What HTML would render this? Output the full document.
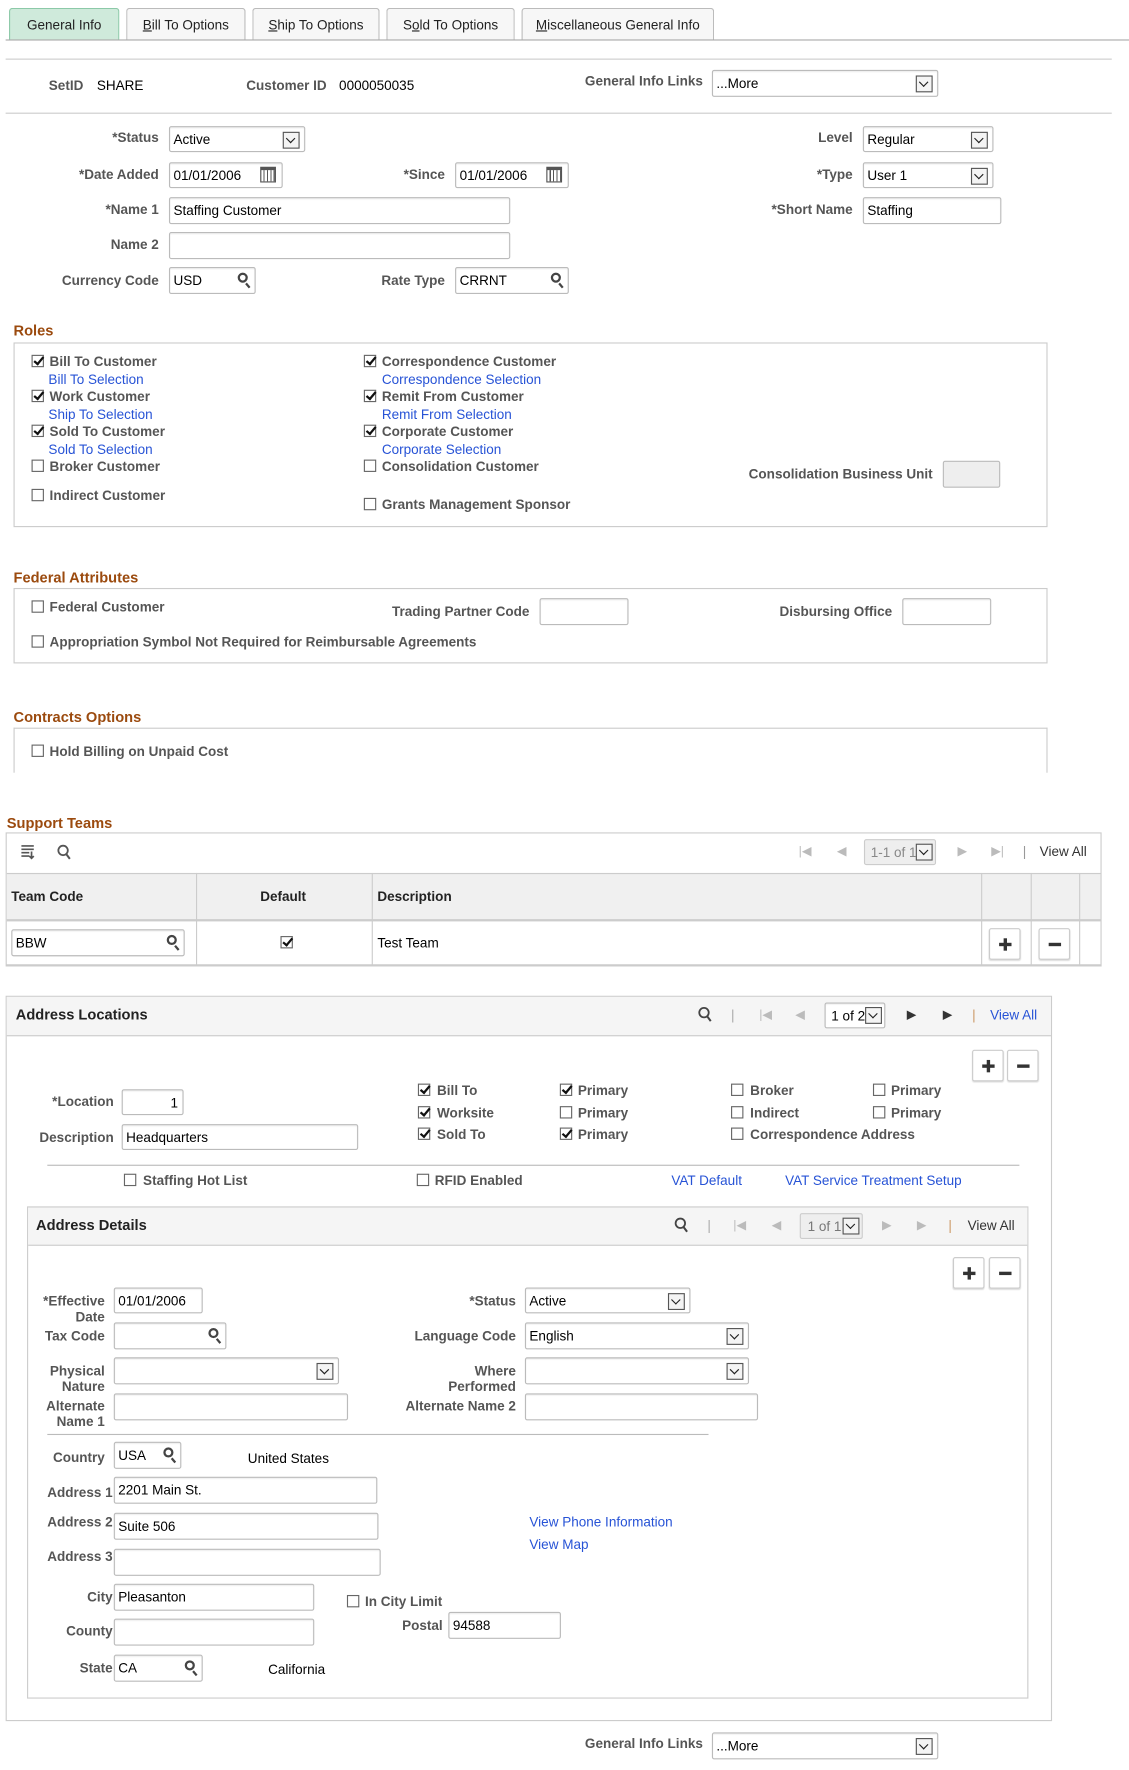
<!DOCTYPE html>
<html><head><meta charset="utf-8"><style>
*{margin:0;padding:0;box-sizing:border-box}
body{width:1129px;height:1764px;overflow:hidden;background:#fff;font-family:"Liberation Sans",Arial,sans-serif;font-size:12px;color:#000}
#w{position:absolute;left:0;top:0;width:1005px;height:1571px;transform:scale(1.1264);transform-origin:0 0}
.a{position:absolute;white-space:nowrap;line-height:14px}
.l{position:absolute;white-space:nowrap;font-weight:bold;color:#555;text-align:right;line-height:14px}
.v{position:absolute;white-space:nowrap;line-height:14px;color:#000}
.i{position:absolute;border:1px solid #bbb;border-radius:2px;background:#fff;padding-left:3px;line-height:22px;white-space:nowrap;box-shadow:inset 0 1px 1px #eee}
.dd{position:absolute;right:4px;top:4px;width:15px;height:15px;border:1px solid #555;background:#f4f4f4}
.dd:after{content:"";position:absolute;left:3px;top:2px;width:5px;height:5px;border-right:1.5px solid #222;border-bottom:1.5px solid #222;transform:rotate(45deg)}
.mg{position:absolute;right:6px;top:4px;width:9px;height:9px;border:2px solid #444;border-radius:50%}
.mg:after{content:"";position:absolute;left:6px;top:7px;width:2px;height:5px;background:#444;transform:rotate(-40deg)}
.cal{position:absolute;right:5px;top:3px;width:14px;height:14px;border:1px solid #555;border-top:3px solid #555;background:repeating-linear-gradient(90deg,#fff 0 2px,#555 2px 3px);}
.cb{position:absolute;width:11px;height:11px;border:1px solid #666;background:#fff}
.cb.c:after{content:"";position:absolute;left:3px;top:-1px;width:3px;height:7px;border-right:2px solid #111;border-bottom:2px solid #111;transform:rotate(40deg)}
.lk{position:absolute;white-space:nowrap;color:#2753d6;line-height:14px}
.h{position:absolute;font-weight:bold;color:#9b4a0e;font-size:13px;line-height:14px}
.bx{position:absolute;border:1px solid #ccc}
.hl{position:absolute;height:1px;background:#ccc}
.tab{position:absolute;top:7px;height:29px;border:1px solid #bbb;border-bottom:none;border-radius:3px 3px 0 0;background:#f7f7f7;text-align:center;line-height:28px;color:#222}
.btn{position:absolute;width:28px;height:28px;border:1px solid #ccc;border-radius:2px;background:#fff;box-shadow:0 1px 1px #ddd}
.btn.p:before{content:"";position:absolute;left:8px;top:12px;width:11px;height:3px;background:#333}
.btn.p:after{content:"";position:absolute;left:12px;top:8px;width:3px;height:11px;background:#333}
.btn.m:before{content:"";position:absolute;left:8px;top:12px;width:11px;height:3px;background:#333}
.nv{position:absolute;color:#bbb;font-size:11px;line-height:14px}
.u{text-decoration:underline}
</style></head><body><div id="w">

<div class="tab" style="left:8px;width:98px;background:#cfeadb;border-color:#8cc9a8;font-weight:normal">General Info</div>
<div class="tab" style="left:112px;width:106px"><span class="u">B</span>ill To Options</div>
<div class="tab" style="left:224px;width:113px"><span class="u">S</span>hip To Options</div>
<div class="tab" style="left:343px;width:114px">S<span class="u">o</span>ld To Options</div>
<div class="tab" style="left:463px;width:171px"><span class="u">M</span>iscellaneous General Info</div>
<div class="hl" style="left:5px;top:35px;width:998px;background:#aaa"></div>
<div class="hl" style="left:5px;top:52px;width:982px"></div>

<div class="l" style="right:931px;top:69px">SetID</div>
<div class="v" style="left:86px;top:69px">SHARE</div>
<div class="l" style="right:715px;top:69px">Customer ID</div>
<div class="v" style="left:301px;top:69px">0000050035</div>
<div class="l" style="right:381px;top:65px">General Info Links</div>
<div class="i" style="left:632px;top:62px;width:201px;height:24px">...More<div class="dd"></div></div>
<div class="hl" style="left:5px;top:100px;width:982px"></div>

<div class="l" style="right:864px;top:115px">*Status</div>
<div class="i" style="left:150px;top:112px;width:121px;height:23px">Active<div class="dd"></div></div>
<div class="l" style="right:248px;top:115px">Level</div>
<div class="i" style="left:766px;top:112px;width:116px;height:23px">Regular<div class="dd"></div></div>

<div class="l" style="right:864px;top:148px">*Date Added</div>
<div class="i" style="left:150px;top:144px;width:101px;height:23px">01/01/2006<div class="cal"></div></div>
<div class="l" style="right:610px;top:148px">*Since</div>
<div class="i" style="left:404px;top:144px;width:101px;height:23px">01/01/2006<div class="cal"></div></div>
<div class="l" style="right:248px;top:148px">*Type</div>
<div class="i" style="left:766px;top:144px;width:116px;height:23px">User 1<div class="dd"></div></div>

<div class="l" style="right:864px;top:179px">*Name 1</div>
<div class="i" style="left:150px;top:175px;width:303px;height:24px">Staffing Customer</div>
<div class="l" style="right:248px;top:179px">*Short Name</div>
<div class="i" style="left:766px;top:175px;width:123px;height:24px">Staffing</div>
<div class="l" style="right:864px;top:210px">Name 2</div>
<div class="i" style="left:150px;top:206px;width:303px;height:24px"></div>

<div class="l" style="right:864px;top:242px">Currency Code</div>
<div class="i" style="left:150px;top:237px;width:77px;height:24px">USD<div class="mg"></div></div>
<div class="l" style="right:610px;top:242px">Rate Type</div>
<div class="i" style="left:404px;top:237px;width:101px;height:24px">CRRNT<div class="mg"></div></div>

<div class="h" style="left:12px;top:287px">Roles</div>
<div class="bx" style="left:12px;top:304px;width:918px;height:164px"></div>
<div class="cb c" style="left:28px;top:315px"></div><div class="l" style="left:44px;top:314px;text-align:left">Bill To Customer</div>
<div class="lk" style="left:43px;top:330px">Bill To Selection</div>
<div class="cb c" style="left:28px;top:346px"></div><div class="l" style="left:44px;top:345px;text-align:left">Work Customer</div>
<div class="lk" style="left:43px;top:361px">Ship To Selection</div>
<div class="cb c" style="left:28px;top:377px"></div><div class="l" style="left:44px;top:376px;text-align:left">Sold To Customer</div>
<div class="lk" style="left:43px;top:392px">Sold To Selection</div>
<div class="cb" style="left:28px;top:408px"></div><div class="l" style="left:44px;top:407px;text-align:left">Broker Customer</div>
<div class="cb" style="left:28px;top:434px"></div><div class="l" style="left:44px;top:433px;text-align:left">Indirect Customer</div>

<div class="cb c" style="left:323px;top:315px"></div><div class="l" style="left:339px;top:314px;text-align:left">Correspondence Customer</div>
<div class="lk" style="left:339px;top:330px">Correspondence Selection</div>
<div class="cb c" style="left:323px;top:346px"></div><div class="l" style="left:339px;top:345px;text-align:left">Remit From Customer</div>
<div class="lk" style="left:339px;top:361px">Remit From Selection</div>
<div class="cb c" style="left:323px;top:377px"></div><div class="l" style="left:339px;top:376px;text-align:left">Corporate Customer</div>
<div class="lk" style="left:339px;top:392px">Corporate Selection</div>
<div class="cb" style="left:323px;top:408px"></div><div class="l" style="left:339px;top:407px;text-align:left">Consolidation Customer</div>
<div class="cb" style="left:323px;top:442px"></div><div class="l" style="left:339px;top:441px;text-align:left">Grants Management Sponsor</div>
<div class="l" style="right:177px;top:414px">Consolidation Business Unit</div>
<div class="i" style="left:837px;top:409px;width:51px;height:24px;background:#eee"></div>

<div class="h" style="left:12px;top:506px">Federal Attributes</div>
<div class="bx" style="left:12px;top:522px;width:918px;height:67px"></div>
<div class="cb" style="left:28px;top:533px"></div><div class="l" style="left:44px;top:532px;text-align:left">Federal Customer</div>
<div class="l" style="right:535px;top:536px">Trading Partner Code</div>
<div class="i" style="left:479px;top:531px;width:79px;height:24px"></div>
<div class="l" style="right:213px;top:536px">Disbursing Office</div>
<div class="i" style="left:801px;top:531px;width:79px;height:24px"></div>
<div class="cb" style="left:28px;top:564px"></div><div class="l" style="left:44px;top:563px;text-align:left">Appropriation Symbol Not Required for Reimbursable Agreements</div>

<div class="h" style="left:12px;top:630px">Contracts Options</div>
<div style="position:absolute;left:12px;top:646px;width:918px;height:40px;border:1px solid #ccc;border-bottom:none"></div>
<div class="cb" style="left:28px;top:661px"></div><div class="l" style="left:44px;top:660px;text-align:left">Hold Billing on Unpaid Cost</div>

<div class="h" style="left:6px;top:724px">Support Teams</div>
<div class="bx" style="left:5px;top:739px;width:973px;height:119px;border-bottom:2px solid #ccc"></div>
<svg class="a" style="left:18px;top:749px" width="14" height="14" viewBox="0 0 14 14"><path d="M1 2h11M1 5h11M1 8h7M1 11h7M10 7v6M8 11l2 2 2-2" stroke="#555" stroke-width="1.5" fill="none"/></svg>
<svg class="a" style="left:50px;top:749px" width="14" height="15" viewBox="0 0 14 15"><circle cx="6" cy="6" r="4.2" stroke="#555" stroke-width="1.6" fill="none"/><path d="M9 9.5l3 4" stroke="#555" stroke-width="1.8"/></svg>
<div class="nv" style="left:709px;top:749px">|◀</div>
<div class="nv" style="left:743px;top:749px">◀</div>
<div class="i" style="left:767px;top:745px;width:64px;height:23px;background:#eee;color:#888;padding-left:5px;border-color:#ccc">1-1 of 1<div class="dd" style="right:2px;top:3px"></div></div>
<div class="nv" style="left:850px;top:749px">▶</div>
<div class="nv" style="left:880px;top:749px">▶|</div>
<div class="a" style="left:908px;top:749px;color:#999">|</div>
<div class="a" style="left:923px;top:749px;color:#333">View All</div>
<div style="position:absolute;left:6px;top:775px;width:971px;height:43px;background:#f0f0f0;border-top:1px solid #ccc;border-bottom:2px solid #ccc"></div>
<div style="position:absolute;left:174px;top:775px;width:1px;height:82px;background:#ccc"></div>
<div style="position:absolute;left:330px;top:775px;width:1px;height:82px;background:#ccc"></div>
<div style="position:absolute;left:871px;top:775px;width:1px;height:82px;background:#ccc"></div>
<div style="position:absolute;left:915px;top:775px;width:1px;height:82px;background:#ccc"></div>
<div style="position:absolute;left:958px;top:775px;width:1px;height:82px;background:#ccc"></div>
<div class="a" style="left:10px;top:789px;font-weight:bold;color:#222">Team Code</div>
<div class="a" style="left:231px;top:789px;font-weight:bold;color:#222">Default</div>
<div class="a" style="left:335px;top:789px;font-weight:bold;color:#222">Description</div>
<div class="i" style="left:10px;top:825px;width:154px;height:24px">BBW<div class="mg"></div></div>
<div class="cb c" style="left:249px;top:831px"></div>
<div class="v" style="left:335px;top:830px">Test Team</div>
<div class="btn p" style="left:878px;top:824px"></div>
<div class="btn m" style="left:922px;top:824px"></div>

<div class="bx" style="left:5px;top:884px;width:929px;height:644px"></div>
<div style="position:absolute;left:6px;top:885px;width:927px;height:35px;background:#f5f5f5;border-bottom:1px solid #ccc"></div>
<div class="a" style="left:14px;top:894px;font-weight:bold;font-size:13px;color:#222">Address Locations</div>
<svg class="a" style="left:619px;top:893px" width="14" height="15" viewBox="0 0 14 15"><circle cx="6" cy="6" r="4.2" stroke="#444" stroke-width="1.6" fill="none"/><path d="M9 9.5l3 4" stroke="#444" stroke-width="1.8"/></svg>
<div class="a" style="left:649px;top:894px;color:#aaa">|</div>
<div class="nv" style="left:674px;top:894px">|◀</div>
<div class="nv" style="left:706px;top:894px">◀</div>
<div class="i" style="left:732px;top:890px;width:54px;height:23px;padding-left:5px">1 of 2<div class="dd" style="right:2px;top:3px"></div></div>
<div class="a" style="left:805px;top:894px;color:#333;font-size:11px">▶</div>
<div class="a" style="left:837px;top:894px;color:#333;font-size:11px">▶</div>
<div class="a" style="left:863px;top:894px;color:#c96">|</div>
<div class="lk" style="left:879px;top:894px">View All</div>
<div class="btn p" style="left:863px;top:932px"></div>
<div class="btn m" style="left:894px;top:932px"></div>

<div class="l" style="right:904px;top:971px;font-weight:bold">*Location</div>
<div class="i" style="left:108px;top:967px;width:55px;height:23px;text-align:right;padding-right:4px">1</div>
<div class="l" style="right:904px;top:1003px">Description</div>
<div class="i" style="left:108px;top:998px;width:210px;height:23px">Headquarters</div>

<div class="cb c" style="left:371px;top:962px"></div><div class="l" style="left:388px;top:961px;text-align:left">Bill To</div>
<div class="cb c" style="left:371px;top:982px"></div><div class="l" style="left:388px;top:981px;text-align:left">Worksite</div>
<div class="cb c" style="left:371px;top:1001px"></div><div class="l" style="left:388px;top:1000px;text-align:left">Sold To</div>
<div class="cb c" style="left:497px;top:962px"></div><div class="l" style="left:513px;top:961px;text-align:left">Primary</div>
<div class="cb" style="left:497px;top:982px"></div><div class="l" style="left:513px;top:981px;text-align:left">Primary</div>
<div class="cb c" style="left:497px;top:1001px"></div><div class="l" style="left:513px;top:1000px;text-align:left">Primary</div>
<div class="cb" style="left:649px;top:962px"></div><div class="l" style="left:666px;top:961px;text-align:left">Broker</div>
<div class="cb" style="left:649px;top:982px"></div><div class="l" style="left:666px;top:981px;text-align:left">Indirect</div>
<div class="cb" style="left:649px;top:1001px"></div><div class="l" style="left:666px;top:1000px;text-align:left">Correspondence Address</div>
<div class="cb" style="left:775px;top:962px"></div><div class="l" style="left:791px;top:961px;text-align:left">Primary</div>
<div class="cb" style="left:775px;top:982px"></div><div class="l" style="left:791px;top:981px;text-align:left">Primary</div>
<div class="hl" style="left:42px;top:1034px;width:863px;background:#bbb"></div>
<div class="cb" style="left:110px;top:1042px"></div><div class="l" style="left:127px;top:1041px;text-align:left">Staffing Hot List</div>
<div class="cb" style="left:370px;top:1042px"></div><div class="l" style="left:386px;top:1041px;text-align:left">RFID Enabled</div>
<div class="lk" style="left:596px;top:1041px">VAT Default</div>
<div class="lk" style="left:697px;top:1041px">VAT Service Treatment Setup</div>

<div class="bx" style="left:24px;top:1071px;width:889px;height:437px"></div>
<div style="position:absolute;left:25px;top:1072px;width:887px;height:34px;background:#f5f5f5;border-bottom:1px solid #ccc"></div>
<div class="a" style="left:32px;top:1081px;font-weight:bold;font-size:13px;color:#222">Address Details</div>
<svg class="a" style="left:598px;top:1080px" width="14" height="15" viewBox="0 0 14 15"><circle cx="6" cy="6" r="4.2" stroke="#444" stroke-width="1.6" fill="none"/><path d="M9 9.5l3 4" stroke="#444" stroke-width="1.8"/></svg>
<div class="a" style="left:628px;top:1081px;color:#aaa">|</div>
<div class="nv" style="left:651px;top:1081px">|◀</div>
<div class="nv" style="left:685px;top:1081px">◀</div>
<div class="i" style="left:710px;top:1077px;width:56px;height:23px;background:#eee;color:#777;padding-left:6px;border-color:#ccc">1 of 1<div class="dd" style="right:2px;top:3px"></div></div>
<div class="nv" style="left:783px;top:1081px">▶</div>
<div class="nv" style="left:814px;top:1081px">▶</div>
<div class="a" style="left:842px;top:1081px;color:#c96">|</div>
<div class="a" style="left:859px;top:1081px;color:#333">View All</div>
<div class="btn p" style="left:846px;top:1116px"></div>
<div class="btn m" style="left:878px;top:1116px"></div>

<div class="l" style="right:912px;top:1148px">*Effective<br>Date</div>
<div class="i" style="left:101px;top:1143px;width:79px;height:23px">01/01/2006</div>
<div class="l" style="right:547px;top:1148px">*Status</div>
<div class="i" style="left:466px;top:1143px;width:147px;height:23px">Active<div class="dd"></div></div>
<div class="l" style="right:912px;top:1179px">Tax Code</div>
<div class="i" style="left:101px;top:1174px;width:100px;height:24px"><div class="mg"></div></div>
<div class="l" style="right:547px;top:1179px">Language Code</div>
<div class="i" style="left:466px;top:1174px;width:199px;height:24px">English<div class="dd"></div></div>
<div class="l" style="right:912px;top:1210px">Physical<br>Nature</div>
<div class="i" style="left:101px;top:1205px;width:200px;height:24px"><div class="dd"></div></div>
<div class="l" style="right:547px;top:1210px">Where<br>Performed</div>
<div class="i" style="left:466px;top:1205px;width:199px;height:24px"><div class="dd"></div></div>
<div class="l" style="right:912px;top:1241px">Alternate<br>Name 1</div>
<div class="i" style="left:101px;top:1237px;width:208px;height:24px"></div>
<div class="l" style="right:547px;top:1241px">Alternate Name 2</div>
<div class="i" style="left:466px;top:1237px;width:207px;height:24px"></div>
<div class="hl" style="left:42px;top:1273px;width:587px;background:#bbb"></div>

<div class="l" style="right:912px;top:1287px">Country</div>
<div class="i" style="left:101px;top:1280px;width:60px;height:24px">USA<div class="mg"></div></div>
<div class="v" style="left:220px;top:1288px">United States</div>
<div class="l" style="right:905px;top:1318px">Address 1</div>
<div class="i" style="left:101px;top:1311px;width:234px;height:24px">2201 Main St.</div>
<div class="l" style="right:905px;top:1344px">Address 2</div>
<div class="i" style="left:101px;top:1343px;width:235px;height:24px">Suite 506</div>
<div class="lk" style="left:470px;top:1344px">View Phone Information</div>
<div class="lk" style="left:470px;top:1364px">View Map</div>
<div class="l" style="right:905px;top:1375px">Address 3</div>
<div class="i" style="left:101px;top:1375px;width:237px;height:24px"></div>
<div class="l" style="right:905px;top:1411px">City</div>
<div class="i" style="left:101px;top:1406px;width:178px;height:24px">Pleasanton</div>
<div class="cb" style="left:308px;top:1416px"></div><div class="l" style="left:324px;top:1415px;text-align:left">In City Limit</div>
<div class="l" style="right:612px;top:1436px">Postal</div>
<div class="i" style="left:398px;top:1431px;width:100px;height:24px">94588</div>
<div class="l" style="right:905px;top:1441px">County</div>
<div class="i" style="left:101px;top:1437px;width:178px;height:24px"></div>
<div class="l" style="right:905px;top:1474px">State</div>
<div class="i" style="left:101px;top:1469px;width:79px;height:24px">CA<div class="mg"></div></div>
<div class="v" style="left:238px;top:1475px">California</div>

<div class="l" style="right:381px;top:1541px">General Info Links</div>
<div class="i" style="left:632px;top:1538px;width:201px;height:24px">...More<div class="dd"></div></div>
</div></body></html>
